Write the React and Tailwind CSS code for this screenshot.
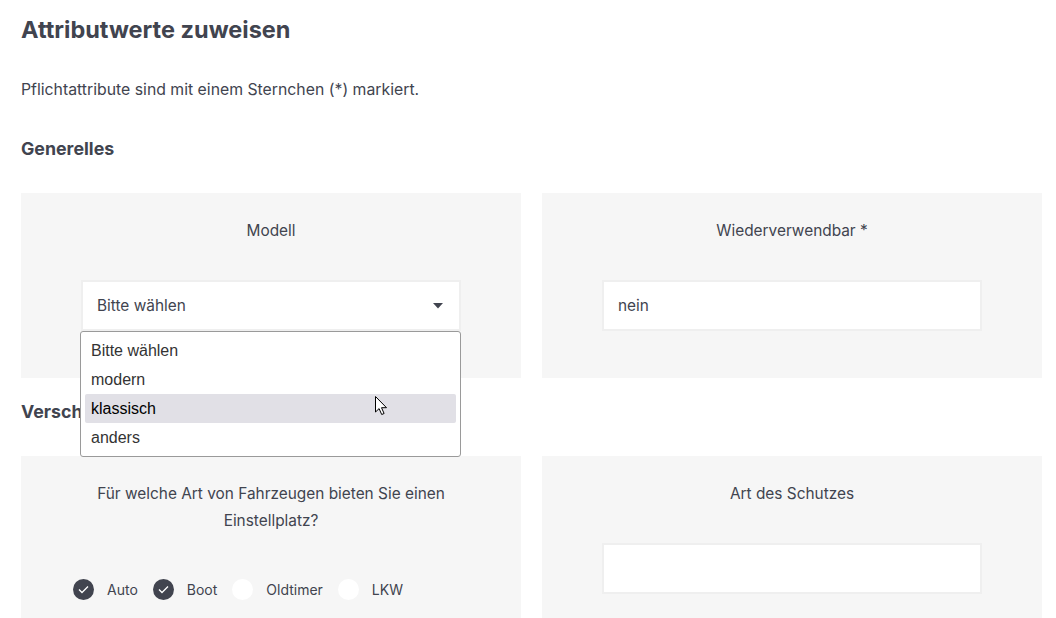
import React from 'react';

const font = { fontFamily: 'Inter, "Noto Sans", sans-serif' };

const options = ['Bitte wählen', 'modern', 'klassisch', 'anders'];

const vehicles = [
  { label: 'Auto', checked: true },
  { label: 'Boot', checked: true },
  { label: 'Oldtimer', checked: false },
  { label: 'LKW', checked: false },
];

const Check = ({ checked }) =>
  checked ? (
    <span className="flex h-[21px] w-[21px] items-center justify-center rounded-full bg-[#41444f]">
      <svg width="11" height="9" viewBox="0 0 11 9" fill="none">
        <path d="M1 4.5l3 3L10 1.5" stroke="#fff" strokeWidth="1.3" />
      </svg>
    </span>
  ) : (
    <span className="h-[21px] w-[21px] rounded-full bg-white" />
  );

const Card = ({ label, children, bodyClass = 'px-[60px]' }) => (
  <div className="bg-[#f6f6f6] pt-[24px] pb-[47px]">
    <div className="px-[60px] text-center text-[15.4px] leading-[27px] text-[#41444f]">
      {label}
    </div>
    <div className={`mt-[36px] ${bodyClass}`}>{children}</div>
  </div>
);

const Input = ({ value }) => (
  <div className="flex h-[51px] items-center border-2 border-[#efefef] bg-white px-[14px] text-[15.4px] text-[#41444f]">
    {value}
  </div>
);

const Cursor = () => (
  <svg
    className="absolute left-[375px] top-[396px] z-20"
    width="13"
    height="20"
    viewBox="0 0 13 20"
  >
    <path
      d="M0.5 0.5v15.5l3.6-3.4 2.6 5.9 2.4-1-2.6-5.8h5z"
      fill="#fff"
      stroke="#000"
      strokeWidth="1"
      strokeLinejoin="round"
    />
  </svg>
);

export default function App() {
  return (
    <div className="relative h-[618px] overflow-hidden bg-white px-[21px] pt-[15px]" style={font}>
      <h1 className="text-[23.5px] font-bold leading-[30px] text-[#41444f]">
        Attributwerte zuweisen
      </h1>
      <p className="mt-[34px] text-[15.8px] leading-[22px] text-[#41444f]">
        Pflichtattribute sind mit einem Sternchen (*) markiert.
      </p>
      <h2 className="mt-[36px] text-[17.8px] font-bold leading-[24px] text-[#41444f]">
        Generelles
      </h2>

      <div className="mt-[32px] grid w-[1021px] grid-cols-2 gap-[21px]">
        <Card label="Modell">
          <div className="relative">
            <div className="flex h-[51px] items-center justify-between border-2 border-[#efefef] bg-white pl-[14px] pr-[16px] text-[15.4px] text-[#41444f]">
              <span>Bitte wählen</span>
              <svg width="10" height="6" viewBox="0 0 10 6">
                <path d="M0 0h10L5 5.5z" fill="#41444f" />
              </svg>
            </div>
            <div
              className="absolute left-[-1px] top-[51px] z-10 w-[381px] rounded-[3px] border border-[#9a9a9a] bg-white p-[4px] text-[16px] text-[#333]"
              style={{ fontFamily: '"Liberation Sans", Arial, sans-serif' }}
            >
              {options.map((o) => (
                <div
                  key={o}
                  className={`h-[29px] rounded-[2px] px-[6px] leading-[29px] ${
                    o === 'klassisch' ? 'bg-[#e1e0e6] text-black' : ''
                  }`}
                >
                  {o}
                </div>
              ))}
            </div>
          </div>
        </Card>
        <Card label="Wiederverwendbar *">
          <Input value="nein" />
        </Card>
      </div>

      <h2 className="mt-[22px] text-[17.8px] font-bold leading-[24px] text-[#41444f]">
        Verschiedenes
      </h2>

      <div className="mt-[32px] grid w-[1021px] grid-cols-2 gap-[21px]">
        <Card
          label="Für welche Art von Fahrzeugen bieten Sie einen Einstellplatz?"
          bodyClass="pl-[52px]"
        >
          <div className="flex h-[38px] items-center text-[14px] text-[#41444f]">
            {vehicles.map((v) => (
              <label key={v.label} className="mr-[15px] flex items-center gap-[13px]">
                <Check checked={v.checked} />
                <span>{v.label}</span>
              </label>
            ))}
          </div>
        </Card>
        <Card label="Art des Schutzes">
          <Input value="" />
        </Card>
      </div>

      <Cursor />
    </div>
  );
}
